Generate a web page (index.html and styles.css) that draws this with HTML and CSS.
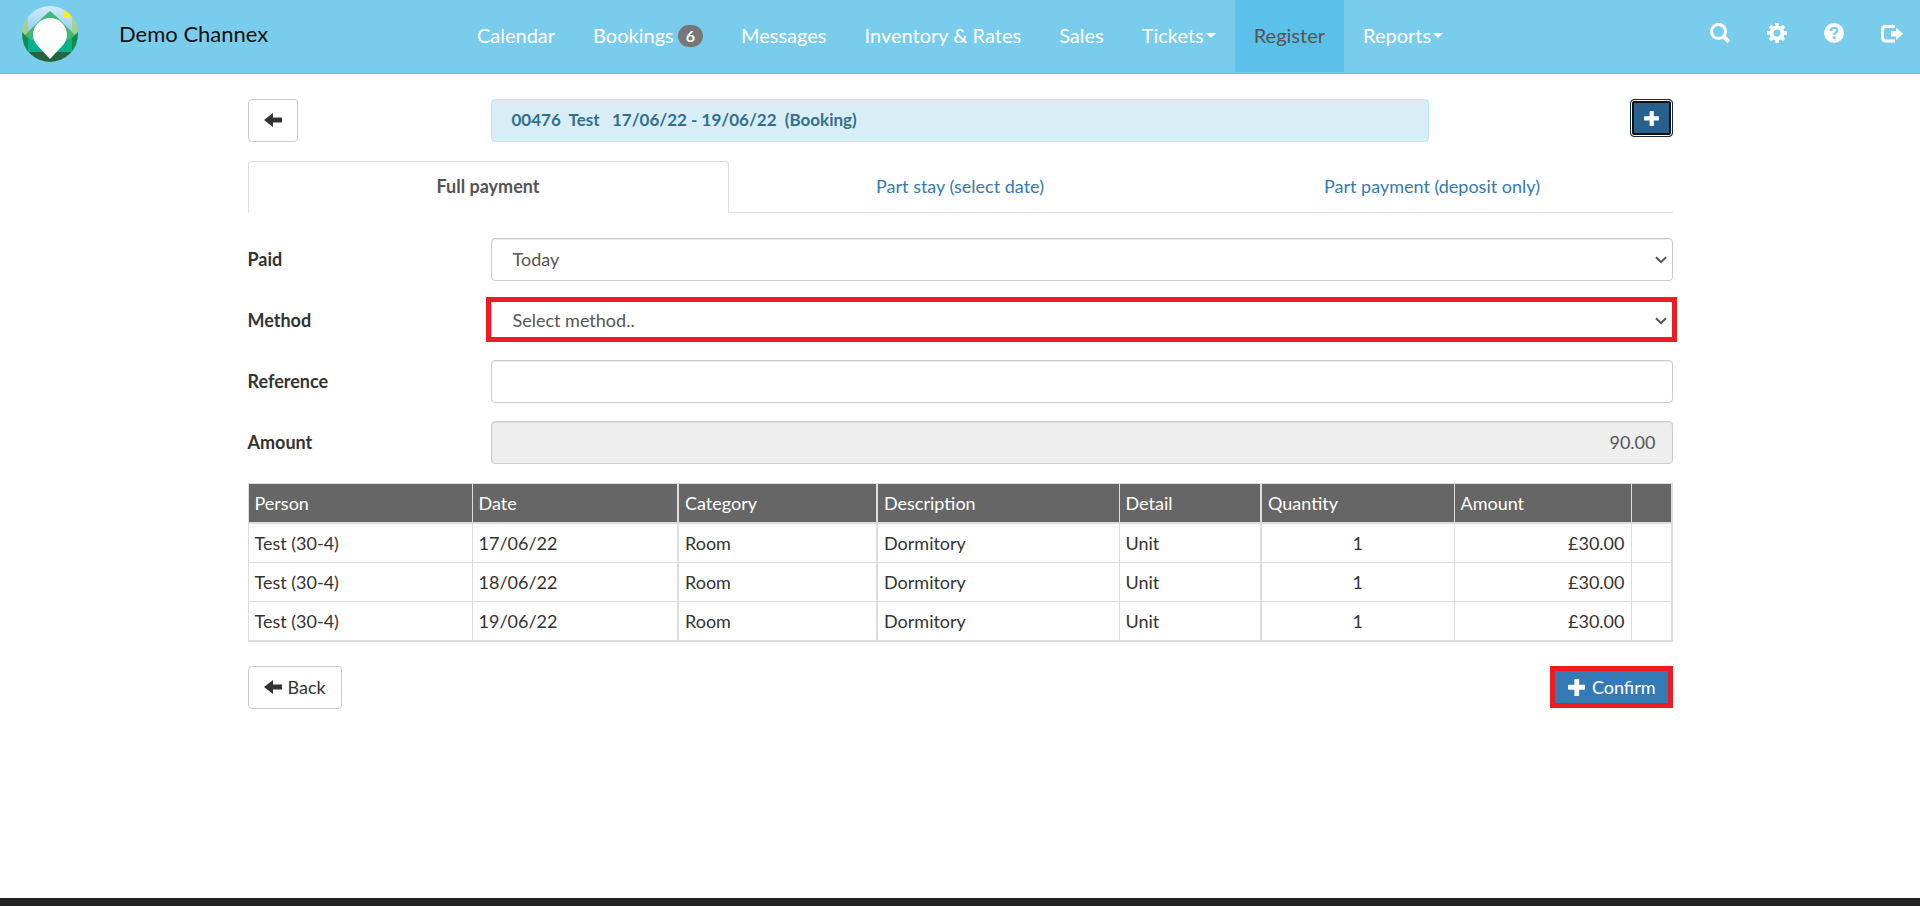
FILE: index.html
```html
<!DOCTYPE html>
<html lang="en">
<head>
    <meta charset="UTF-8">
    <meta name="viewport" content="width=device-width, initial-scale=1.0">
    <title>Demo Channex - Register</title>
    <link rel="stylesheet" href="styles.css">
</head>
<body>
    <!-- shared icons -->
    <svg class="sprite" aria-hidden="true">
        <symbol id="icon-arrow" viewBox="0 0 18 14">
            <path d="M0 7 L9 0 V4.5 H18 V9.5 H9 V14 Z"/>
        </symbol>
        <symbol id="icon-plus" viewBox="0 0 16 16">
            <path d="M6 0.5 Q6 0 6.5 0 H10 Q10.5 0 10.5 0.5 V5.5 H15.5 Q16 5.5 16 6 V9.5 Q16 10 15.5 10 H10.5 V15.5 Q10.5 16 10 16 H6.5 Q6 16 6 15.5 V10 H0.5 Q0 10 0 9.5 V6 Q0 5.5 0.5 5.5 H6 Z"/>
        </symbol>
        <symbol id="icon-chevron" viewBox="0 0 12 8">
            <path d="M1 1.2 L6 6.2 L11 1.2" fill="none" stroke="#555" stroke-width="2"/>
        </symbol>
    </svg>

    <header class="navbar">
        <div class="brand">
            <a href="#" class="logo" aria-label="Home">
                <svg viewBox="0 0 56 56" width="56" height="56">
                    <defs>
                        <clipPath id="round"><circle cx="28" cy="28" r="28"/></clipPath>
                        <linearGradient id="sky" x1="0" y1="0" x2="0" y2="1">
                            <stop offset="0" stop-color="#d3ebfb"/>
                            <stop offset="1" stop-color="#7cc6f5"/>
                        </linearGradient>
                    </defs>
                    <g clip-path="url(#round)">
                        <rect width="56" height="34" fill="url(#sky)"/>
                        <path d="M0 12 H6 V32 H0 Z M50 12 H56 V32 H50 Z" fill="#a6d383"/>
                        <path d="M41 4 H49 V12 H41 Z" fill="#f9ed1c"/>
                        <path d="M28 5 L36 12 L56 32 V46 H0 V32 L20 12 Z" fill="#43b675"/>
                        <path d="M6 31 L22 46 H6 Z M50 31 L34 46 H50 Z" fill="#06b08b"/>
                        <path d="M0 26 L6 32 V46 H0 Z M56 26 L50 32 V46 H56 Z" fill="#128c4c"/>
                        <path d="M6 34 H50 V46 H6 Z" fill="#06b08b"/>
                        <rect y="46" width="56" height="10" fill="#25643f"/>
                        <path d="M28 53 L15 39 Q11 34 11 29 A17 17 0 0 1 45 29 Q45 34 41 39 Z" fill="#fff"/>
                    </g>
                </svg>
            </a>
            <span class="brand-name">Demo Channex</span>
        </div>

        <nav class="menu">
            <a href="#">Calendar</a>
            <a href="#">Bookings <span class="badge">6</span></a>
            <a href="#">Messages</a>
            <a href="#">Inventory &amp; Rates</a>
            <a href="#">Sales</a>
            <a href="#">Tickets<span class="caret"></span></a>
            <a href="#" class="active">Register</a>
            <a href="#">Reports<span class="caret"></span></a>
        </nav>

        <div class="tools">
            <a href="#" aria-label="Search">
                <svg viewBox="0 0 20 20" width="20" height="20">
                    <circle cx="8.5" cy="8.5" r="7" fill="none" stroke="#fff" stroke-width="3"/>
                    <path d="M13 13 L19 19" stroke="#fff" stroke-width="4"/>
                </svg>
            </a>
            <a href="#" aria-label="Settings">
                <svg viewBox="0 0 20 20" width="20" height="20">
                    <circle cx="10" cy="10" r="5.5" fill="none" stroke="#fff" stroke-width="4"/>
                    <path d="M10 0 V4 M10 16 V20 M0 10 H4 M16 10 H20 M3 3 L6 6 M14 14 L17 17 M17 3 L14 6 M6 14 L3 17" stroke="#fff" stroke-width="3.4"/>
                </svg>
            </a>
            <a href="#" aria-label="Help">
                <svg viewBox="0 0 20 20" width="20" height="20">
                    <circle cx="10" cy="10" r="10" fill="#fff"/>
                    <path d="M6.8 8 Q6.8 4.9 10.2 4.9 Q13.2 4.9 13.2 7.4 Q13.2 8.8 11.6 9.7 Q10.2 10.5 10.2 12" fill="none" stroke="#7accec" stroke-width="2.4"/>
                    <rect x="8.8" y="13.4" width="2.8" height="2.8" fill="#7accec"/>
                </svg>
            </a>
            <a href="#" aria-label="Log out">
                <svg viewBox="0 0 22 20" width="22" height="20">
                    <path d="M14 3.5 H5 Q1.5 3.5 1.5 7 V14.5 Q1.5 18 5 18 H14" fill="none" stroke="#fff" stroke-width="3"/>
                    <path d="M10 8 H15 V4.5 L22 10.7 L15 17 V13.5 H10 Z" fill="#fff"/>
                </svg>
            </a>
        </div>
    </header>

    <main class="container">
        <div class="top-row">
            <div>
                <button class="btn" aria-label="Back"><svg class="icon-arrow"><use href="#icon-arrow"/></svg></button>
            </div>
            <div class="booking-info">00476&nbsp; Test &nbsp; 17/06/22 - 19/06/22&nbsp; (Booking)</div>
            <button class="btn-add" aria-label="Add"><svg class="icon-plus-sm"><use href="#icon-plus"/></svg></button>
        </div>

        <div class="tabs">
            <a href="#" class="active">Full payment</a>
            <a href="#">Part stay (select date)</a>
            <a href="#">Part payment (deposit only)</a>
        </div>

        <form>
            <div class="form-row">
                <label for="paid">Paid</label>
                <div class="field">
                    <select id="paid" class="form-control">
                        <option>Today</option>
                    </select>
                    <svg class="chevron"><use href="#icon-chevron"/></svg>
                </div>
            </div>
            <div class="form-row">
                <label for="method">Method</label>
                <div class="field highlight">
                    <select id="method" class="form-control">
                        <option>Select method..</option>
                    </select>
                    <svg class="chevron"><use href="#icon-chevron"/></svg>
                </div>
            </div>
            <div class="form-row">
                <label for="reference">Reference</label>
                <div class="field">
                    <input type="text" id="reference" class="form-control">
                </div>
            </div>
            <div class="form-row">
                <label for="amount">Amount</label>
                <div class="field">
                    <input type="text" id="amount" class="form-control amount" value="90.00" readonly>
                </div>
            </div>

            <table class="items">
                <colgroup>
                    <col class="col-person">
                    <col class="col-date">
                    <col class="col-category">
                    <col class="col-description">
                    <col class="col-detail">
                    <col class="col-quantity">
                    <col class="col-amount">
                    <col>
                </colgroup>
                <thead>
                    <tr>
                        <th>Person</th>
                        <th>Date</th>
                        <th>Category</th>
                        <th>Description</th>
                        <th>Detail</th>
                        <th>Quantity</th>
                        <th>Amount</th>
                        <th></th>
                    </tr>
                </thead>
                <tbody>
                    <tr>
                        <td>Test (30-4)</td>
                        <td>17/06/22</td>
                        <td>Room</td>
                        <td>Dormitory</td>
                        <td>Unit</td>
                        <td class="center">1</td>
                        <td class="right">£30.00</td>
                        <td></td>
                    </tr>
                    <tr>
                        <td>Test (30-4)</td>
                        <td>18/06/22</td>
                        <td>Room</td>
                        <td>Dormitory</td>
                        <td>Unit</td>
                        <td class="center">1</td>
                        <td class="right">£30.00</td>
                        <td></td>
                    </tr>
                    <tr>
                        <td>Test (30-4)</td>
                        <td>19/06/22</td>
                        <td>Room</td>
                        <td>Dormitory</td>
                        <td>Unit</td>
                        <td class="center">1</td>
                        <td class="right">£30.00</td>
                        <td></td>
                    </tr>
                </tbody>
            </table>

            <div class="actions">
                <button type="button" class="btn"><svg class="icon-arrow"><use href="#icon-arrow"/></svg>Back</button>
                <button type="button" class="btn-confirm"><svg class="icon-plus"><use href="#icon-plus"/></svg>Confirm</button>
            </div>
        </form>
    </main>

    <footer class="bottom-bar"></footer>
</body>
</html>
```

FILE: styles.css
```css
* {
    box-sizing: border-box;
}

body {
    display: flex;
    flex-direction: column;
    min-height: 100vh;
    margin: 0;
    background-color: #fff;
    color: #333;
    font-family: Lato, sans-serif;
    font-size: 18px;
    line-height: 26px;
}

a {
    color: #337ab7;
    text-decoration: none;
}

button,
input,
select {
    font: inherit;
}

button {
    cursor: pointer;
}

.sprite {
    position: absolute;
    width: 0;
    height: 0;
}

/* navbar */
.navbar {
    display: grid;
    grid-template-columns: 1fr auto 1fr;
    height: 74px;
    background-color: #7accec;
    border-bottom: 1px solid #5bc0ea;
}

.brand {
    display: flex;
    align-items: center;
    gap: 41px;
    padding: 0 0 5px 22px;
}

.logo {
    display: flex;
}

.brand-name {
    color: #111;
    font-size: 22px;
}

.menu {
    display: flex;
    height: 72px;
}

.menu a {
    display: flex;
    align-items: center;
    padding: 0 19px 2px;
    color: #fff;
    font-size: 20px;
}

.menu a.active {
    background-color: #5bc0ea;
    color: #555;
}

.badge {
    margin: 2px 0 0 4px;
    padding: 3px 8px;
    border-radius: 11px;
    background-color: #777;
    font-size: 16px;
    font-weight: bold;
    line-height: 16px;
}

.caret {
    margin-left: 2px;
    border-top: 5px solid;
    border-left: 5px solid transparent;
    border-right: 5px solid transparent;
}

.tools {
    display: flex;
    align-items: center;
    justify-content: flex-end;
    gap: 37px;
    padding: 0 17px 7px 0;
}

.tools a {
    display: flex;
}

/* page */
.container {
    flex: 1;
    width: 100%;
    max-width: 1455px;
    margin: 0 auto;
    padding: 25px 15px;
}

.top-row {
    display: grid;
    grid-template-columns: 243px 938px 1fr;
    align-items: start;
    margin-bottom: 19px;
}

.booking-info {
    height: 43px;
    padding: 7px 20px;
    border: 1px solid #bce8f1;
    border-radius: 4px;
    background-color: #d9edf7;
    color: #31708f;
    font-size: 17px;
    font-weight: bold;
}

.btn,
.btn-add,
.btn-confirm {
    display: inline-flex;
    align-items: center;
    border-radius: 4px;
}

.btn {
    gap: 6px;
    height: 43px;
    padding: 0 15px 1px;
    border: 1px solid #ccc;
    background-color: #fff;
    color: #333;
}

.btn-add {
    justify-self: end;
    justify-content: center;
    width: 43px;
    height: 38px;
    padding: 0;
    border: 1px solid #122b40;
    background-color: #286090;
    box-shadow: inset 0 0 0 1px #fff, inset 0 0 0 3px #101010;
    color: #fff;
}

.btn-confirm {
    gap: 7px;
    height: 42px;
    padding: 0 12px 0 13px;
    border: 5px solid #ed1c24;
    border-radius: 0;
    background-color: #337ab7;
    color: #fff;
}

.icon-arrow {
    width: 18px;
    height: 14px;
    fill: currentColor;
}

.icon-plus {
    width: 17px;
    height: 17px;
    fill: currentColor;
}

.icon-plus-sm {
    width: 15px;
    height: 15px;
    fill: currentColor;
}

.tabs {
    display: grid;
    grid-template-columns: 481fr 463fr 481fr;
    margin-bottom: 25px;
}

.tabs a {
    height: 52px;
    padding: 12px 0;
    border-bottom: 1px solid #ddd;
    text-align: center;
}

.tabs a.active {
    padding: 11px 0;
    border: 1px solid #ddd;
    border-bottom-color: #fff;
    border-radius: 4px 4px 0 0;
    color: #555;
    font-weight: bold;
}

/* form */
.form-row {
    display: grid;
    grid-template-columns: 243px 1fr;
    align-items: center;
    margin-bottom: 18px;
}

.form-row label {
    padding-bottom: 1px;
    font-weight: bold;
}

.field {
    position: relative;
}

.form-control {
    display: block;
    width: 100%;
    height: 43px;
    padding: 0 16px 1px;
    border: 1px solid #ccc;
    border-radius: 4px;
    background-color: #fff;
    box-shadow: inset 0 1px 1px rgba(0, 0, 0, 0.075);
    color: #555;
}

select.form-control {
    padding: 0 32px 1px 21px;
    appearance: none;
}

.chevron {
    position: absolute;
    top: 18px;
    right: 6px;
    width: 12px;
    height: 8px;
    pointer-events: none;
}

.form-control.amount {
    background-color: #eee;
    text-align: right;
}

.highlight::after {
    content: "";
    position: absolute;
    top: -2px;
    right: -4px;
    bottom: 0;
    left: -5px;
    border: 5px solid #ed1c24;
    pointer-events: none;
}

/* charges table */
.items {
    width: 100%;
    margin: 19px 0 24px;
    border-collapse: collapse;
    table-layout: fixed;
}

.col-person {
    width: 224px;
}

.col-date {
    width: 206px;
}

.col-category {
    width: 199px;
}

.col-description {
    width: 242px;
}

.col-detail {
    width: 142px;
}

.col-quantity {
    width: 193px;
}

.col-amount {
    width: 177px;
}

.items th,
.items td {
    padding: 6px;
    border: 1px solid #ddd;
    text-align: left;
}

.items th {
    border-bottom-width: 2px;
    background-color: #666;
    color: #fff;
    font-weight: normal;
}

.items th:nth-child(2),
.items th:nth-child(3),
.items th:nth-child(5),
.items th:nth-child(8),
.items td:nth-child(2),
.items td:nth-child(3),
.items td:nth-child(5),
.items td:nth-child(8) {
    border-right-width: 2px;
}

.items tr:last-child td {
    border-bottom-width: 2px;
}

.items .center {
    text-align: center;
}

.items .right {
    text-align: right;
}

.actions {
    display: flex;
    justify-content: space-between;
}

.bottom-bar {
    height: 8px;
    background-color: #222;
}
```
